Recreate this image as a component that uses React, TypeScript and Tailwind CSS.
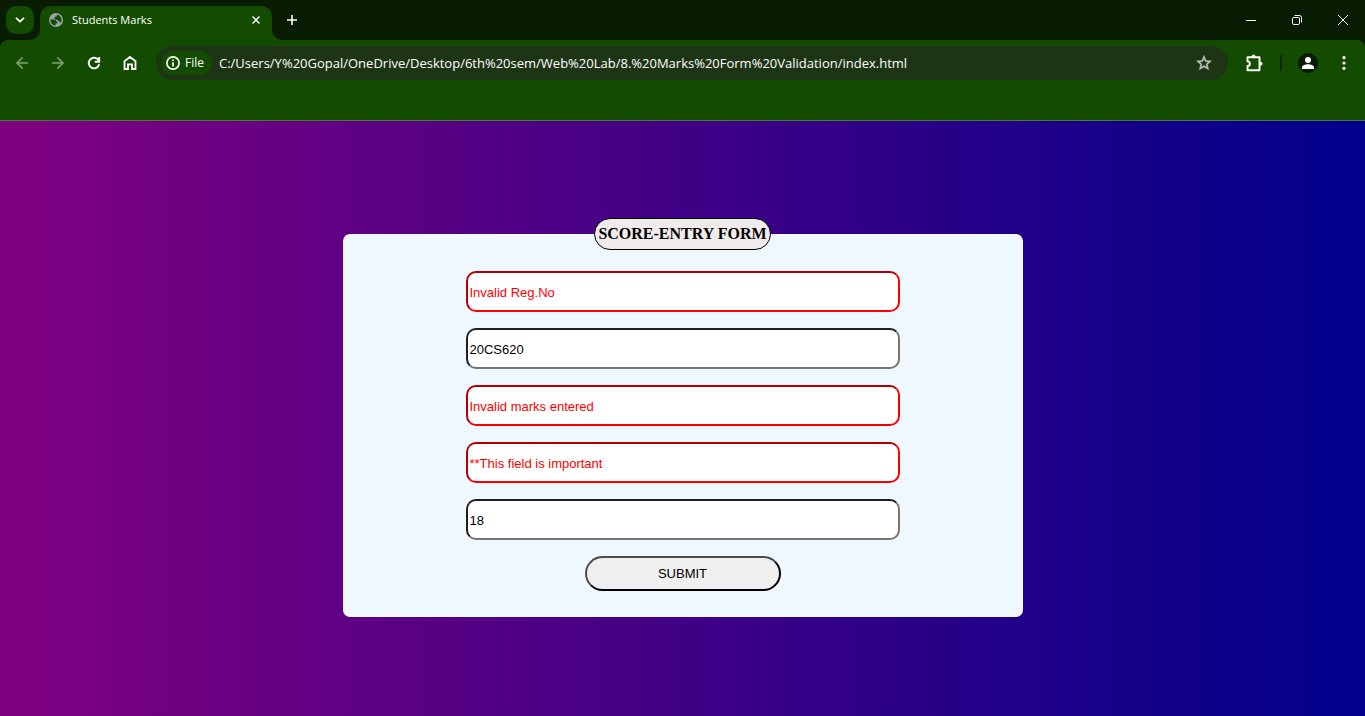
import { useState } from "react";
import clsx from "clsx";

const iconButton = "flex h-9 w-9 shrink-0 items-center justify-center rounded-full";

function TabStrip() {
  return (
    <header className="flex h-10 items-start bg-[#071c02] pt-1.5 pl-1.5 text-white">
      <button aria-label="Search tabs" className="mr-1.5 flex h-7 w-7 shrink-0 items-center justify-center rounded-[10px] bg-[#134b00]">
        <svg width="10" height="6" viewBox="0 0 10 6" fill="none" stroke="currentColor" strokeWidth="1.8">
          <path d="M1 .8 5 4.6 9 .8" />
        </svg>
      </button>
      <div className="relative flex h-[34px] w-[232px] items-center rounded-t-[10px] bg-[#134b00] pb-1.5 pl-[9px]">
        <svg className="absolute bottom-0 -left-2.5" width="10" height="10" viewBox="0 0 10 10">
          <path d="M10 0v10H0A10 10 0 0 0 10 0Z" fill="#134b00" />
        </svg>
        <svg className="absolute -right-2.5 bottom-0" width="10" height="10" viewBox="0 0 10 10">
          <path d="M0 0v10h10A10 10 0 0 1 0 0Z" fill="#134b00" />
        </svg>
        <svg width="14" height="14" viewBox="0 0 14 14">
          <circle cx="7" cy="7" r="7" fill="#9aa0a6" />
          <path
            d="M1.500 6.500h3.200c1.500 0 2.300.8 2.300 2.100h1.300v1.800H6.600v2.100C3.500 12.400 1.300 9.700 1.500 6.500ZM8.600 1.700c2.300.7 3.900 2.800 3.900 5.200 0 1-.3 1.900-.7 2.700-.5-.4-.9-.9-1.700-.9-.2-1.300-.9-1.800-2.200-1.800-1.600 0-2.400-.6-2.400-1.800 0-1 .8-1.500 2-1.500 0-1 .4-1.600 1.100-1.900Z"
            fill="#134b00"
          />
        </svg>
        <span className="ml-[9px] flex-1 truncate text-[11px]">Students Marks</span>
        <button aria-label="Close tab" className="mr-1.5 flex h-5 w-5 items-center justify-center">
          <svg width="8" height="8" viewBox="0 0 8 8" stroke="currentColor" strokeWidth="1.5">
            <path d="m.5.5 7 7m0-7-7 7" />
          </svg>
        </button>
      </div>
      <button aria-label="New tab" className="ml-1.5 flex h-7 w-7 items-center justify-center">
        <svg width="10" height="10" viewBox="0 0 10 10" stroke="currentColor" strokeWidth="1.6">
          <path d="M5 0v10M0 5h10" />
        </svg>
      </button>
      <div className="ml-auto flex h-7">
        <button aria-label="Minimize" className="flex w-[46px] items-center justify-center">
          <svg width="10" height="10" viewBox="0 0 10 10" stroke="currentColor">
            <path d="M0 5.500h10" />
          </svg>
        </button>
        <button aria-label="Restore" className="flex w-[46px] items-center justify-center">
          <svg width="10" height="10" viewBox="0 0 10 10" fill="none" stroke="currentColor">
            <rect x=".5" y="2.500" width="7" height="7" rx="1.300" />
            <path d="M2.500.5H7.500a2 2 0 0 1 2 2v5" />
          </svg>
        </button>
        <button aria-label="Close window" className="flex w-[45px] items-center justify-center">
          <svg width="10" height="10" viewBox="0 0 10 10" stroke="currentColor">
            <path d="m0 0 10 10M10 0 0 10" />
          </svg>
        </button>
      </div>
    </header>
  );
}

function Toolbar() {
  return (
    <div className="bg-[#071c02]">
      <div className="h-[81px] rounded-t-[8px] border-b border-[#4a7a3b] bg-[#134b00] pt-1.5 pr-[3px] pl-1 text-white">
        <nav className="flex h-[34px] items-center">
          <button aria-label="Back" className={clsx(iconButton, "text-[#759d69]")}>
            <svg width="18" height="18" viewBox="0 0 24 24" fill="currentColor" stroke="currentColor" strokeWidth=".5">
              <path d="M20 11H7.830l5.590-5.590L12 4l-8 8 8 8 1.410-1.410L7.830 13H20v-2z" />
            </svg>
          </button>
          <button aria-label="Forward" className={clsx(iconButton, "text-[#759d69]")}>
            <svg width="18" height="18" viewBox="0 0 24 24" fill="currentColor" stroke="currentColor" strokeWidth=".5">
              <path d="m12 4-1.410 1.410L16.170 11H4v2h12.170l-5.580 5.590L12 20l8-8z" />
            </svg>
          </button>
          <button aria-label="Reload" className={iconButton}>
            <svg width="14" height="14" viewBox="0 0 14 14" fill="none" stroke="currentColor" strokeWidth="1.900">
              <path d="M12.200 8.300A5.300 5.300 0 1 1 11 3.500L12.300 5" />
              <path d="M12.200 1v4.800H7.800" />
            </svg>
          </button>
          <button aria-label="Home" className={iconButton}>
            <svg width="14" height="16" viewBox="0 0 14 16" fill="none" stroke="currentColor" strokeWidth="1.800">
              <path d="M1.500 6.200 7 2l5.500 4.200V14H9V9.400H5V14H1.500Z" />
            </svg>
          </button>
          <div className="mx-2 flex h-[34px] min-w-0 flex-1 items-center rounded-full bg-[#1d3515] pr-[15px] pl-[5px]">
            <button className="flex h-6 shrink-0 items-center gap-[5px] rounded-full bg-[#134b00] pr-2 pl-[5px] text-[12px]">
              <svg width="14" height="14" viewBox="0 0 14 14" fill="none" stroke="currentColor">
                <circle cx="7" cy="7" r="6.100" strokeWidth="1.700" />
                <path d="M7 6.200v4.200M7 3.500v1.600" strokeWidth="1.700" />
              </svg>
              File
            </button>
            <input
              aria-label="Address"
              className="ml-[7px] min-w-0 flex-1 bg-transparent pt-0.5 text-[13px] text-white outline-none"
              defaultValue="C:/Users/Y%20Gopal/OneDrive/Desktop/6th%20sem/Web%20Lab/8.%20Marks%20Form%20Validation/index.html"
            />
            <button aria-label="Bookmark this page" className="text-[#b8c2b4]">
              <svg width="18" height="18" viewBox="0 0 24 24" fill="currentColor" stroke="currentColor" strokeWidth=".7">
                <path d="m22 9.240-7.190-.62L12 2 9.190 8.630 2 9.240l5.460 4.730L5.820 21 12 17.270 18.180 21l-1.630-7.030L22 9.240zM12 15.400l-3.760 2.270 1-4.280-3.320-2.880 4.380-.38L12 6.100l1.710 4.040 4.380.38-3.320 2.880 1 4.280L12 15.400z" />
              </svg>
            </button>
          </div>
          <button aria-label="Extensions" className={iconButton}>
            <svg width="18" height="18" viewBox="0 0 18 18" fill="none" stroke="currentColor" strokeWidth="1.900" strokeLinejoin="round">
              <path d="M2.500 3.200h12v13h-12v-4.200a2.300 2.300 0 0 0 0-4.600Z" />
              <path d="M6.800 2.700a1.700 1.700 0 0 1 3.400 0ZM15.300 8a1.700 1.700 0 0 1 0 3.400Z" fill="currentColor" strokeWidth="1" />
            </svg>
          </button>
          <span className="mx-2 h-4 w-0.5 shrink-0 bg-[#0b2a02]" />
          <button aria-label="Profile" className={iconButton}>
            <svg width="20" height="20" viewBox="0 0 20 20">
              <circle cx="10" cy="10" r="10" fill="#071c02" />
              <circle cx="10" cy="7" r="3" fill="#fff" />
              <path d="M4 16v-1.500c0-2 3.500-3.200 6-3.200s6 1.200 6 3.200V16Z" fill="#fff" />
            </svg>
          </button>
          <button aria-label="Menu" className={iconButton}>
            <svg width="4" height="14" viewBox="0 0 4 14" fill="currentColor">
              <circle cx="2" cy="1.700" r="1.600" />
              <circle cx="2" cy="7" r="1.600" />
              <circle cx="2" cy="12.300" r="1.600" />
            </svg>
          </button>
        </nav>
      </div>
    </div>
  );
}

interface Field {
  label: string;
  value: string;
  invalid: boolean;
}

const initialFields: Field[] = [
  { label: "Register number", value: "Invalid Reg.No", invalid: true },
  { label: "Course code", value: "20CS620", invalid: false },
  { label: "First test marks", value: "Invalid marks entered", invalid: true },
  { label: "Second test marks", value: "**This field is important", invalid: true },
  { label: "Third test marks", value: "18", invalid: false },
];

function ScoreForm() {
  const [fields, setFields] = useState(initialFields);

  const update = (index: number, value: string) =>
    setFields(fields.map((field, i) => (i === index ? { ...field, value } : field)));

  return (
    <form className="w-full max-w-[680px]" onSubmit={(event) => event.preventDefault()}>
      <fieldset className="rounded-[7px] bg-[#f0f8ff] px-4 pt-[21px] pb-[26px]">
        <legend className="mx-auto h-8 rounded-[16px] border border-black bg-[#f0ebeb] px-[3px] text-center font-['Liberation_Serif',serif] text-[16px] leading-[30px] font-bold whitespace-nowrap text-black">
          SCORE-ENTRY FORM
        </legend>
        <div className="mx-auto flex max-w-[434px] flex-col items-center gap-4">
          {fields.map((field, index) => (
            <input
              key={field.label}
              aria-label={field.label}
              aria-invalid={field.invalid}
              value={field.value}
              onChange={(event) => update(index, event.target.value)}
              className={clsx(
                "h-[41px] w-full rounded-[10px] border-2 bg-white px-0.5 pt-0.5 text-[13px]",
                field.invalid
                  ? "border-t-[#b20000] border-r-[#ff0000] border-b-[#ff0000] border-l-[#b20000] text-[#ff0000]"
                  : "border-t-[#1f1f1f] border-r-[#767676] border-b-[#767676] border-l-[#1f1f1f] text-black",
              )}
            />
          ))}
          <button
            type="submit"
            className="h-[35px] w-[196px] rounded-full border-2 border-t-[#4c4c4c] border-r-black border-b-black border-l-[#4c4c4c] bg-[#efefef] text-[13px] text-black"
          >
            SUBMIT
          </button>
        </div>
      </fieldset>
    </form>
  );
}

export default function App() {
  return (
    <div className="flex min-h-screen flex-col">
      <div className="font-['Open_Sans',sans-serif]">
        <TabStrip />
        <Toolbar />
      </div>
      <main className="flex flex-1 items-center justify-center bg-[linear-gradient(to_right,#800080,#00008b)] px-4 pb-0.5 font-['Liberation_Sans',sans-serif]">
        <ScoreForm />
      </main>
    </div>
  );
}
